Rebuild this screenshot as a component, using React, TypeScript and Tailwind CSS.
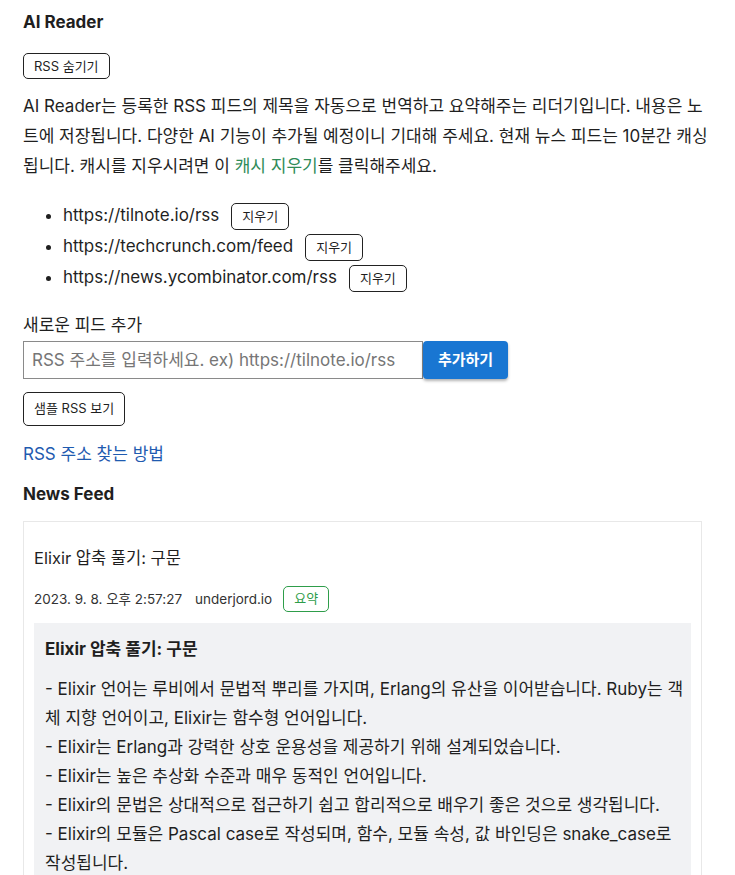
import React from "react";

const feeds = [
  "https://tilnote.io/rss",
  "https://techcrunch.com/feed",
  "https://news.ycombinator.com/rss",
];

const summary = [
  "- Elixir 언어는 루비에서 문법적 뿌리를 가지며, Erlang의 유산을 이어받습니다. Ruby는 객체 지향 언어이고, Elixir는 함수형 언어입니다.",
  "- Elixir는 Erlang과 강력한 상호 운용성을 제공하기 위해 설계되었습니다.",
  "- Elixir는 높은 추상화 수준과 매우 동적인 언어입니다.",
  "- Elixir의 문법은 상대적으로 접근하기 쉽고 합리적으로 배우기 좋은 것으로 생각됩니다.",
  "- Elixir의 모듈은 Pascal case로 작성되며, 함수, 모듈 속성, 값 바인딩은 snake_case로 작성됩니다.",
];

export default function App() {
  return (
    <div
      className="min-h-screen bg-white text-[#1f1f1f]"
      style={{ fontFamily: "Inter, 'Noto Sans CJK KR', sans-serif" }}
    >
      <div className="w-[735px] pl-[23px] pr-[24px] pt-[10px]">
        {/* Header */}
        <h2 className="text-[17px] font-bold leading-[24px]">AI Reader</h2>
        <button className="mt-[19px] h-[26px] px-[10px] border border-[#222] rounded-[5px] text-[13px] leading-[24px]">
          RSS 숨기기
        </button>
        <p className="mt-[12px] text-[17px] leading-[30px]">
          AI Reader는 등록한 RSS 피드의 제목을 자동으로 번역하고 요약해주는 리더기입니다. 내용은 노트에 저장됩니다. 다양한 AI 기능이
          추가될 예정이니 기대해 주세요. 현재 뉴스 피드는 10분간 캐싱됩니다. 캐시를 지우시려면 이{" "}
          <span className="text-[#2e8b57]">캐시 지우기</span>를 클릭해주세요.
        </p>

        {/* Feed list */}
        <ul className="mt-[19px] pl-[40px] list-disc text-[17px]">
          {feeds.map((f) => (
            <li key={f} className="leading-[31px]">
              {f}
              <button className="ml-[12px] inline-block align-middle h-[27px] px-[10px] border border-[#222] rounded-[5px] text-[13px] leading-[25px]">
                지우기
              </button>
            </li>
          ))}
        </ul>

        {/* Add feed */}
        <div className="mt-[20px] text-[17px] leading-[24px]">새로운 피드 추가</div>
        <div className="mt-[4px] flex">
          <input
            className="w-[400px] h-[38px] px-[8px] border border-[#8a8a8a] text-[17px] placeholder:text-[#767676] outline-none"
            placeholder="RSS 주소를 입력하세요. ex) https://tilnote.io/rss"
          />
          <button className="w-[85px] h-[38px] bg-[#1976d2] text-white font-bold text-[15px] rounded-[4px] shadow-[0_2px_3px_rgba(0,0,0,0.3)]">
            추가하기
          </button>
        </div>
        <button className="mt-[13px] h-[34px] px-[10px] border border-[#222] rounded-[5px] text-[13px]">
          샘플 RSS 보기
        </button>
        <div className="mt-[16px]">
          <a className="text-[17px] leading-[24px] text-[#1f5bb0]">RSS 주소 찾는 방법</a>
        </div>

        {/* News Feed */}
        <h2 className="mt-[16px] text-[17px] font-bold leading-[24px]">News Feed</h2>
        <div className="mt-[15px] mr-[9px] border border-[#e8e8e8] px-[10px] pt-[24px]">
          <h3 className="text-[16.5px] leading-[24px]">Elixir 압축 풀기: 구문</h3>
          <div className="mt-[16px] flex items-center text-[13.5px] text-[#333]">
            <span>2023. 9. 8. 오후 2:57:27</span>
            <span className="ml-[13px]">underjord.io</span>
            <button className="ml-[11px] h-[26px] px-[10px] border border-[#2e9d4a] text-[#2e9d4a] rounded-[5px] text-[13px]">
              요약
            </button>
          </div>
          <div className="mt-[11px] bg-[#f1f2f4] pl-[11px] pr-[6px] pt-[14px] pb-[10px]">
            <h4 className="text-[17px] font-bold leading-[24px]">Elixir 압축 풀기: 구문</h4>
            <div className="mt-[14px] text-[17px] leading-[29px]">
              {summary.map((s, i) => (
                <p key={i}>{s}</p>
              ))}
            </div>
          </div>
        </div>
      </div>
    </div>
  );
}
